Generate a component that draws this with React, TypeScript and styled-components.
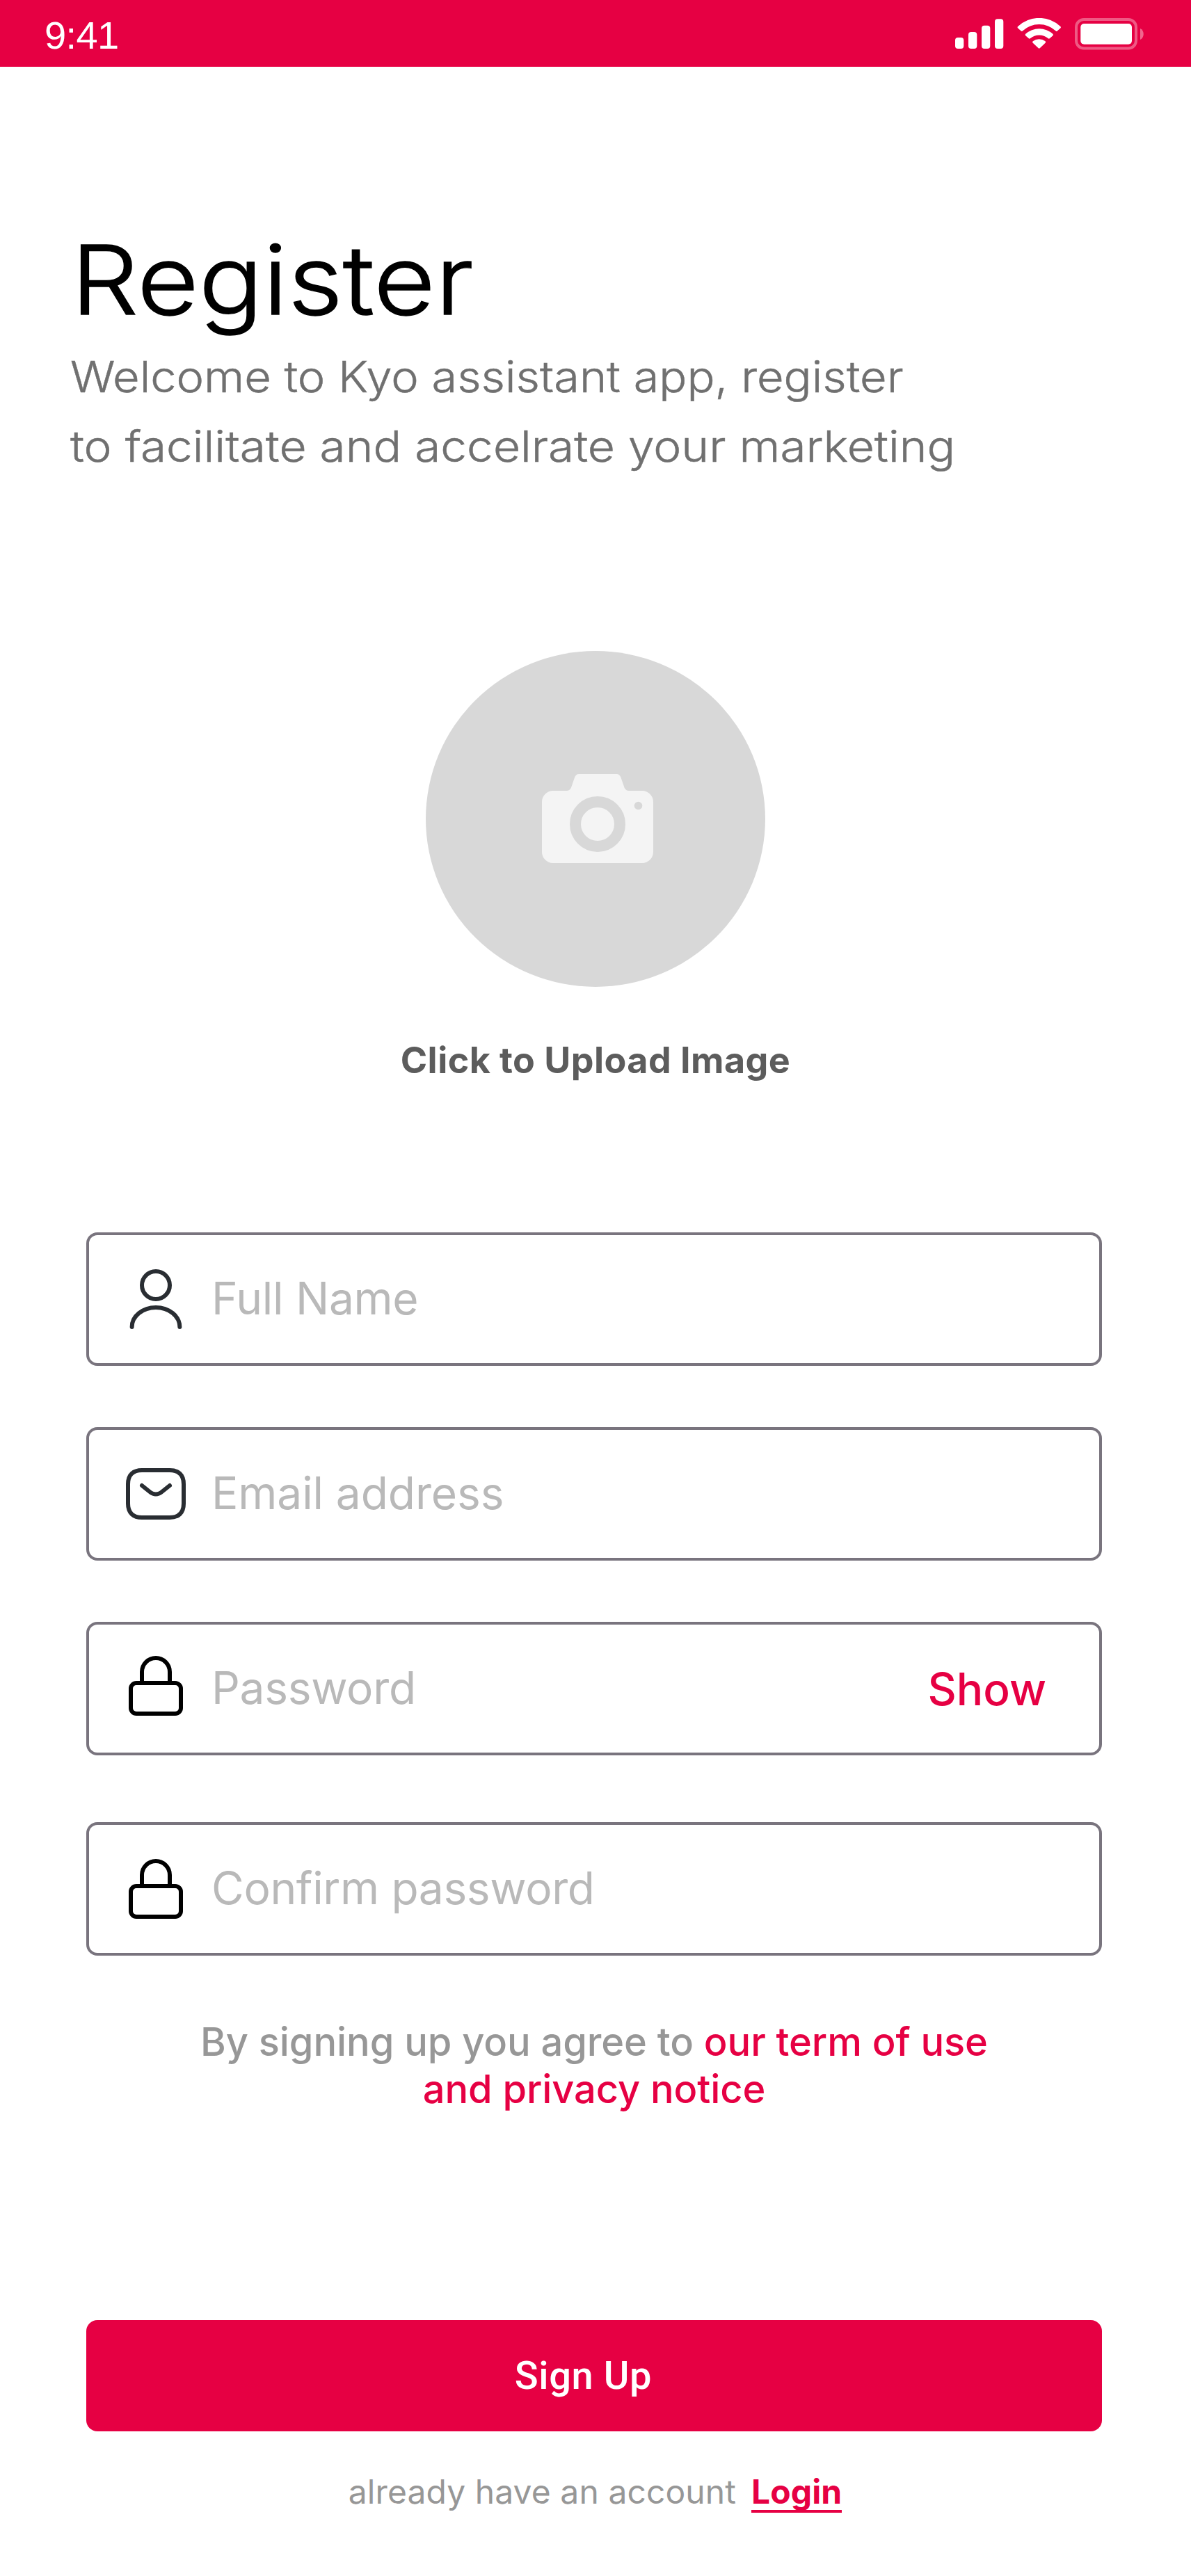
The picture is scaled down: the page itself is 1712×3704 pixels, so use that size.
import React from "react";
import styled, { createGlobalStyle } from "styled-components";

const Global = createGlobalStyle`
  body { margin: 0; background: #fff; }
  * { box-sizing: border-box; }
`;

const accent = "#e60043";

const Screen = styled.main`
  width: 1712px;
  height: 3704px;
  background: #fff;
  display: flex;
  flex-direction: column;
  font-family: Inter, "Liberation Sans", sans-serif;
`;

const StatusBar = styled.header`
  height: 96px;
  padding: 0 68px 0 64px;
  background: ${accent};
  display: flex;
  justify-content: space-between;
`;

const Time = styled.span`
  font: 400 56px/64px "Liberation Sans", Arial, sans-serif;
  letter-spacing: -0.6px;
  padding-top: 19px;
  color: #fff;
`;

const StatusIcons = styled.svg`
  width: 272px;
  height: 46px;
  margin-top: 26px;
`;

const Intro = styled.section`
  padding: 218px 0 0 101px;
  height: 840px;
`;

const Stretch = styled.span<{ $x: number }>`
  display: block;
  width: max-content;
  transform: scaleX(${(p) => p.$x});
  transform-origin: left center;
`;

const Title = styled.h1`
  margin: 0;
  padding-left: 1px;
  font: 300 138px/176px Inter, sans-serif;
  -webkit-text-stroke: 1.4px #000;
  color: #000;
`;

const Lead = styled.p`
  margin: 2px 0 0;
  font: 300 62px/100px Inter, sans-serif;
  -webkit-text-stroke: 0.5px #707070;
  color: #707070;
`;

const Upload = styled.button`
  border: 0;
  padding: 0;
  background: none;
  width: 1712px;
  height: 836px;
  display: flex;
  flex-direction: column;
  align-items: center;
`;

const Avatar = styled.span`
  width: 488px;
  height: 483px;
  border-radius: 50%;
  background: #d8d8d8;
  display: flex;
  justify-content: center;
  padding: 177px 0 0 6px;
`;

const UploadLabel = styled.span`
  font: 700 52px/64px Inter, sans-serif;
  letter-spacing: 0.45px;
  color: #5c5c5c;
  margin-top: 74px;
`;

const Form = styled.form`
  width: 1460px;
  margin-left: 124px;
  display: flex;
  flex-direction: column;
`;

const Field = styled.label<{ $gap: number; $iconTop: number }>`
  height: 192px;
  margin-bottom: ${(p) => p.$gap}px;
  padding: 0 76px 0 48px;
  border: 4px solid #79747e;
  border-radius: 16px;
  display: flex;
  align-items: flex-start;
  svg { flex: none; margin-top: ${(p) => p.$iconTop}px; }
`;

const Placeholder = styled.span<{ $tracking: number }>`
  flex: 1;
  margin: 52px 0 0 32px;
  font-size: 64px;
  line-height: 78px;
  letter-spacing: ${(p) => p.$tracking}px;
  color: #b9b9b9;
`;

const Show = styled.span`
  margin-top: 54px;
  font-size: 64px;
  line-height: 78px;
  font-weight: 500;
  color: ${accent};
`;

const Terms = styled.p`
  margin: 90px 0 0;
  height: 434px;
  text-align: center;
  font-size: 56px;
  line-height: 68px;
  font-weight: 500;
  letter-spacing: -0.08px;
  color: #979797;
  b { font-weight: 500; color: ${accent}; }
`;

const Submit = styled.button`
  height: 160px;
  border: 0;
  border-radius: 16px;
  background: ${accent};
  color: #fff;
  font: 500 56px/68px Roboto, sans-serif;
  letter-spacing: 0.6px;
  padding: 0 31px 0 0;
`;

const Footer = styled.p`
  margin: 58px 0 0;
  display: flex;
  justify-content: center;
  gap: 22px;
  padding-left: 3px;
  font-size: 48px;
  line-height: 58px;
  letter-spacing: 0.08px;
  color: #979797;
`;

const Login = styled.a`
  height: 59px;
  font-weight: 700;
  color: ${accent};
  border-bottom: 4px solid ${accent};
`;

const UserIcon = () => (
  <svg width="96" height="96" viewBox="0 0 24 24" fill="none" stroke="#292d32" strokeWidth="1.5" strokeLinecap="round" strokeLinejoin="round">
    <circle cx="12" cy="7" r="5" />
    <path d="M20.59 22c0-3.87-3.85-7-8.59-7s-8.59 3.13-8.59 7" />
  </svg>
);

const MailIcon = () => (
  <svg width="96" height="96" viewBox="0 0 24 24" fill="none" stroke="#292d32" strokeWidth="1.5" strokeLinecap="round" strokeLinejoin="round">
    <path d="M17 20.5H7c-3 0-5-1.5-5-5v-7c0-3.5 2-5 5-5h10c3 0 5 1.5 5 5v7c0 3.5-2 5-5 5z" />
    <path d="M17 9l-3.13 2.5c-1.03.82-2.72.82-3.75 0L7 9" />
  </svg>
);

const LockIcon = () => (
  <svg width="96" height="96" viewBox="0 0 24 24" fill="none" stroke="#000" strokeWidth="1.5" strokeLinecap="round" strokeLinejoin="round">
    <rect x="3" y="11" width="18" height="11" rx="2" />
    <path d="M7 11V7a5 5 0 0 1 10 0v4" />
  </svg>
);

const CameraIcon = () => (
  <svg width="160" height="128" viewBox="0 0 160 128">
    <path fill="#f4f4f4" d="M16 24H35.500C38.500 24 41 22 42 19.500L47 5C48 2 50 0 53 0H107.500C110.500 0 112.500 2 113.500 5L118.500 19.500C119.500 22 122 24 125 24H144A16 16 0 0 1 160 40V112A16 16 0 0 1 144 128H16A16 16 0 0 1 0 112V40A16 16 0 0 1 16 24Z" />
    <circle cx="80" cy="72" r="32" fill="none" stroke="#d8d8d8" strokeWidth="16" />
    <circle cx="138.500" cy="45.500" r="5.800" fill="#d8d8d8" />
  </svg>
);

const Status = () => (
  <StatusIcons viewBox="1372 26 272 46" fill="#fff">
    <rect x="1373" y="54" width="12.300" height="16" rx="4" />
    <rect x="1392" y="46" width="12.300" height="24" rx="4" />
    <rect x="1411" y="36.700" width="12.300" height="33.300" rx="4" />
    <rect x="1430" y="27.300" width="12.300" height="42.700" rx="4" />
    <path d="M1463.200 38A44.500 44.500 0 0 1 1524.300 38Q1525.500 39.200 1524.300 40.500L1519.800 44.600Q1518.800 45.400 1517.700 44.400A35 35 0 0 0 1469.800 44.400Q1468.700 45.400 1467.700 44.600L1463.200 40.500Q1462 39.200 1463.200 38Z" />
    <path d="M1474.200 48.800A29 29 0 0 1 1513.400 48.800Q1514.600 50 1513.400 51.200L1508.800 55.300Q1507.800 56.200 1506.700 55.300A19.500 19.500 0 0 0 1480.900 55.300Q1479.800 56.200 1478.800 55.300L1474.200 51.200Q1473 50 1474.200 48.800Z" />
    <path d="M1484.700 59.300A14.500 14.500 0 0 1 1502.600 59.300Q1503.800 60.500 1502.600 61.700L1494.700 69.300Q1493.700 70.200 1492.700 69.300L1484.700 61.700Q1483.500 60.500 1484.700 59.300Z" />
    <rect x="1547" y="28" width="86" height="41.500" rx="11" fill="none" stroke="#fff" strokeOpacity=".35" strokeWidth="4" />
    <rect x="1553.300" y="34" width="73.700" height="29.700" rx="5" />
    <path d="M1639 41C1645.300 43.500 1645.300 54.500 1639 57Z" fillOpacity=".4" />
  </StatusIcons>
);

const fields = [
  { label: "Full Name", icon: <UserIcon />, gap: 88, top: 44, tracking: -0.3 },
  { label: "Email address", icon: <MailIcon />, gap: 88, top: 44, tracking: -0.1 },
  { label: "Password", icon: <LockIcon />, gap: 96, top: 40, tracking: -0.3, show: true },
  { label: "Confirm password", icon: <LockIcon />, gap: 0, top: 44, tracking: -0.36 },
];

export default function App() {
  return (
    <Screen>
      <Global />
      <StatusBar>
        <Time>9:41</Time>
        <Status />
      </StatusBar>
      <Intro>
        <Title><Stretch $x={1.109}>Register</Stretch></Title>
        <Lead>
          <Stretch $x={1.075}>Welcome to Kyo assistant app, register</Stretch>
          <Stretch $x={1.09}>to facilitate and accelrate your marketing</Stretch>
        </Lead>
      </Intro>
      <Upload type="button">
        <Avatar><CameraIcon /></Avatar>
        <UploadLabel>Click to Upload Image</UploadLabel>
      </Upload>
      <Form>
        {fields.map((f) => (
          <Field key={f.label} $gap={f.gap} $iconTop={f.top}>
            {f.icon}
            <Placeholder $tracking={f.tracking}>{f.label}</Placeholder>
            {f.show && <Show>Show</Show>}
          </Field>
        ))}
        <Terms>
          By signing up you agree to <b>our term of use<br />and privacy notice</b>
        </Terms>
        <Submit type="button">Sign Up</Submit>
        <Footer>
          <span>already have an account</span>
          <Login>Login</Login>
        </Footer>
      </Form>
    </Screen>
  );
}
